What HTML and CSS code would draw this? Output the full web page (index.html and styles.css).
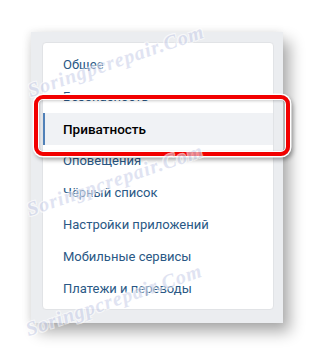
FILE: index.html
```html
<!DOCTYPE html>
<html lang="ru">
<head>
<meta charset="utf-8">
<title>Настройки</title>
<link rel="stylesheet" href="styles.css">
</head>
<body>
<div class="page">
  <div class="panel">
    <ul class="menu">
      <li class="item">Общее</li>
      <li class="item">Безопасность</li>
      <li class="item item-selected">Приватность</li>
      <li class="item">Оповещения</li>
      <li class="item">Чёрный список</li>
      <li class="item">Настройки приложений</li>
      <li class="item">Мобильные сервисы</li>
      <li class="item">Платежи и переводы</li>
    </ul>
  </div>
  <span class="wm wm-top">Soringpcrepair.Com</span>
  <span class="wm wm-mid">Soringpcrepair.Com</span>
  <span class="wm wm-bot">Soringpcrepair.Com</span>
</div>
</body>
</html>
```

FILE: styles.css
```css
html, body {
  margin: 0;
  padding: 0;
  background: #ffffff;
}

.page {
  position: relative;
  width: 315px;
  height: 357px;
  overflow: hidden;
  padding: 32px 0 0 31px;
  box-sizing: border-box;
  font-family: Roboto, "Open Sans", "DejaVu Sans", sans-serif;
}

.panel {
  width: 252px;
  height: 291px;
  box-sizing: border-box;
  padding: 10px 9px 13px 11px;
  background: #ebedf0;
  box-shadow: 7px 9px 14px rgba(0, 0, 0, 0.32), -2px 0 8px rgba(0, 0, 0, 0.08);
}

.menu {
  list-style: none;
  margin: 0;
  padding: 6px 0;
  background: #ffffff;
  border: 1px solid #e1e3e6;
  border-radius: 4px;
  box-sizing: border-box;
  height: 268px;
}

.item {
  height: 32px;
  line-height: 32px;
  padding-left: 20px;
  font-size: 13px;
  color: #2a5885;
  white-space: nowrap;
}

.item-selected {
  position: relative;
  background: #f0f2f5;
  border-left: 2px solid #5181b8;
  padding-left: 18px;
  color: #000000;
  font-weight: 500;
  font-size: 13.5px;
}

.item-selected::after {
  content: "";
  position: absolute;
  top: -18px;
  left: -11px;
  right: -17px;
  bottom: -11px;
  border: 4px solid #f20000;
  border-radius: 9px;
  box-shadow:
    0 0 0 1.5px #ffffff,
    2px 3px 4px 1px rgba(0, 0, 0, 0.35),
    inset 0 0 0 1px #ffffff,
    inset 1px 1px 3px 1px rgba(0, 0, 0, 0.2);
  pointer-events: none;
}

.wm {
  position: absolute;
  font-family: "Liberation Serif", "DejaVu Serif", serif;
  font-style: italic;
  font-weight: bold;
  font-size: 20px;
  letter-spacing: 1px;
  color: #ccd2ea;
  opacity: 0.6;
  white-space: nowrap;
  text-shadow: 1px 1px 0 #fff, -1px -1px 0 #fff, 1px -1px 0 #fff, -1px 1px 0 #fff;
  transform: translate(-50%, -50%) rotate(-19deg);
  pointer-events: none;
}

.wm-top { left: 116px; top: 61px; }
.wm-mid { left: 115px; top: 180px; }
.wm-bot { left: 114px; top: 300px; }
```
